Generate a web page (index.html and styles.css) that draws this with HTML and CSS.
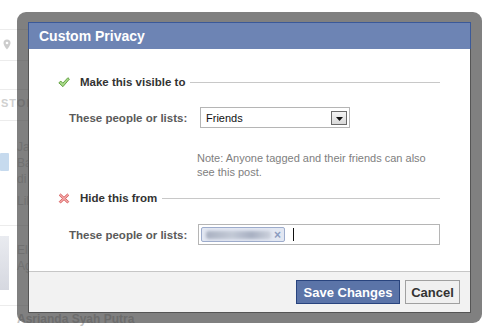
FILE: index.html
```html
<!DOCTYPE html>
<html>
<head>
<meta charset="utf-8">
<link rel="stylesheet" href="styles.css">
</head>
<body>
<div class="page">
  <div class="feed">
    <div class="frow r1"></div>
    <div class="frow r2">
      <svg class="pin" width="8" height="11" viewBox="0 0 8 11"><path d="M4 0.5a3.5 3.5 0 0 0-3.5 3.5c0 2.6 3.5 6.5 3.5 6.5s3.5-3.9 3.5-6.5A3.5 3.5 0 0 0 4 0.5z" fill="#ccc"/><circle cx="4" cy="4" r="1.3" fill="#fff"/></svg>
    </div>
    <div class="frow r3"></div>
    <div class="frow r4"><span class="sto">STORIES</span></div>
    <div class="frow r5">
      <div class="bluei"></div>
      <div class="ftext"><div>Jane</div><div>Bali</div><div>di</div><div class="gap">Like</div></div>
    </div>
    <div class="frow r6">
      <div class="photo"></div>
      <div class="ftext t2"><div>Elise</div><div>Agus</div></div>
    </div>
    <div class="fname">Asrianda Syah Putra</div>
  </div>

  <div class="overlay">
    <div class="dialog">
      <div class="titlebar">Custom Privacy</div>
      <div class="content">
        <div class="heading">
          <svg class="hicon" width="12" height="11" viewBox="0 0 12 11"><path d="M0.8 5.8 L2.9 4.1 L4.8 6.2 L9.9 0.7 L11.4 2.1 L4.9 9.7 Z" fill="#a9db8a" stroke="#5a9b38" stroke-width="0.9" stroke-linejoin="round"/></svg>
          <span class="htext">Make this visible to</span>
          <span class="hline"></span>
        </div>
        <div class="field f1">
          <span class="label">These people or lists:</span>
          <div class="select">
            <span class="seltext">Friends</span>
            <span class="selbtn"><svg width="7" height="4" viewBox="0 0 7 4"><path d="M0 0h7L3.5 4z" fill="#111"/></svg></span>
          </div>
        </div>
        <p class="note">Note: Anyone tagged and their friends can also<br>see this post.</p>
        <div class="heading h2">
          <svg class="hicon" width="12" height="11" viewBox="0 0 12 11"><path d="M1.2 2.4 L2.6 1 L6 4.2 L9.4 1 L10.8 2.4 L7.5 5.5 L10.8 8.6 L9.4 10 L6 6.8 L2.6 10 L1.2 8.6 L4.5 5.5 Z" fill="#f3a7a7" stroke="#d65b5b" stroke-width="0.9" stroke-linejoin="round"/></svg>
          <span class="htext">Hide this from</span>
          <span class="hline"></span>
        </div>
        <div class="field f2">
          <span class="label">These people or lists:</span>
          <div class="tokens">
            <span class="token"><span class="blurname"></span><span class="tx">×</span></span>
            <span class="caret"></span>
          </div>
        </div>
      </div>
      <div class="footer">
        <button class="btn save">Save Changes</button>
        <button class="btn cancel">Cancel</button>
      </div>
    </div>
  </div>
</div>
</body>
</html>
```
FILE: styles.css
```css
html, body {
  margin: 0;
  padding: 0;
}
body {
  width: 492px;
  height: 331px;
  overflow: hidden;
  background: #fff;
  font-family: "Liberation Sans", Arial, sans-serif;
}
.page {
  position: relative;
  width: 492px;
  height: 331px;
}
.feed {
  width: 220px;
  color: #c8c8c8;
  font-size: 11px;
}
.frow {
  border-bottom: 1px solid #ececec;
  width: 60px;
  box-sizing: border-box;
}
.r1 { height: 30px; }
.r2 { height: 31px; padding: 9px 0 0 3px; }
.r3 { height: 29px; }
.r4 { height: 31px; padding: 7px 0 0 1px; }
.sto { font-weight: bold; color: #d0d0d0; letter-spacing: 1px; }
.r5 { height: 105px; display: flex; padding-top: 18px; width: 160px; }
.bluei { width: 9px; height: 18px; margin-top: 14px; background: #c6daee; border-radius: 1px; }
.ftext { margin-left: 8px; line-height: 16px; color: #cfcfcf; font-size: 12px; }
.ftext .gap { margin-top: 6px; }
.r6 { height: 80px; display: flex; padding-top: 10px; width: 160px; }
.photo { width: 9px; height: 54px; background: linear-gradient(#e9ebf0, #d6d8e0); }
.t2 { margin-top: 6px; }
.fname { margin: 6px 0 0 17px; font-weight: bold; font-size: 12px; color: #c4c4c4; }

.overlay {
  position: absolute;
  left: 17px;
  top: 12px;
  width: 465px;
  height: 311px;
  box-sizing: border-box;
  padding: 10px 11px 10px 11px;
  border-radius: 9px;
  background: rgba(62, 62, 62, 0.66);
}
.dialog {
  height: 291px;
  display: flex;
  flex-direction: column;
  background: #fff;
  border: 1px solid #555;
  border-top: none;
  box-sizing: border-box;
}
.titlebar {
  height: 27px;
  box-sizing: border-box;
  background: #6d84b4;
  border: 1px solid #3b5998;
  border-bottom: none;
  margin: 0 -1px;
  color: #fff;
  font-weight: bold;
  font-size: 14px;
  line-height: 26px;
  padding-left: 10px;
}
.content {
  flex: 1;
  padding: 26px 30px 0 29px;
}
.heading {
  display: flex;
  align-items: center;
  height: 14px;
}
.hicon { flex: none; }
.htext {
  margin-left: 10px;
  font-weight: bold;
  font-size: 11.5px;
  color: #333;
}
.hline {
  flex: 1;
  margin-left: 5px;
  border-top: 1px solid #c8c8c8;
  margin-top: 1px;
}
.field {
  display: flex;
  align-items: center;
}
.f1 { margin-top: 18px; }
.label {
  width: 131px;
  padding-left: 11px;
  font-weight: bold;
  font-size: 11.5px;
  color: #5a5a5a;
}
.select {
  width: 150px;
  height: 21px;
  box-sizing: border-box;
  border: 1px solid #b5b5b5;
  display: flex;
  align-items: center;
  justify-content: space-between;
  padding: 0 2px 0 5px;
}
.seltext { font-size: 11px; color: #111; }
.selbtn {
  width: 16px;
  height: 14px;
  box-sizing: border-box;
  border: 1px solid #6a6a6a;
  background: linear-gradient(#f4f4f4, #d9d9d9);
  display: flex;
  align-items: center;
  justify-content: center;
  padding-top: 2px;
}
.note {
  margin: 23px 0 0 139px;
  font-size: 11px;
  line-height: 14px;
  color: #808080;
}
.h2 { margin-top: 12px; }
.f2 { margin-top: 19px; }
.tokens {
  flex: 1;
  margin-left: -2px;
  height: 21px;
  box-sizing: border-box;
  border: 1px solid #b5b5b5;
  display: flex;
  align-items: center;
  padding-left: 2px;
}
.token {
  width: 84px;
  height: 15px;
  box-sizing: border-box;
  border: 1px solid #9daccc;
  border-radius: 2px;
  background: #e2e7f2;
  display: flex;
  align-items: center;
  padding: 0 3px 0 4px;
}
.blurname {
  flex: 1;
  height: 8px;
  border-radius: 3px;
  background: linear-gradient(90deg, #a9b1c1, #c3c9d6 40%, #a8b0c2 70%, #ccd1dc);
  filter: blur(1.6px);
}
.tx {
  margin-left: 3px;
  font-size: 12px;
  font-weight: bold;
  color: #8b9bbf;
  line-height: 12px;
}
.caret {
  width: 1px;
  height: 13px;
  background: #111;
  margin-left: 8px;
}
.footer {
  height: 41px;
  box-sizing: border-box;
  border-top: 1px solid #c6c6c6;
  background: #f2f2f2;
  display: flex;
  justify-content: flex-end;
  align-items: flex-start;
  gap: 5px;
  padding: 8px 10px 0 0;
}
.btn {
  height: 24px;
  box-sizing: border-box;
  font-family: "Liberation Sans", Arial, sans-serif;
  font-weight: bold;
  font-size: 13px;
  padding: 0;
  margin: 0;
  border-radius: 0;
}
.save {
  width: 104px;
  background: #5b74a8;
  border: 1px solid #29447e;
  color: #fff;
}
.cancel {
  width: 55px;
  background: #f0f0f0;
  border: 1px solid #a0a0a0;
  color: #333;
}
```
